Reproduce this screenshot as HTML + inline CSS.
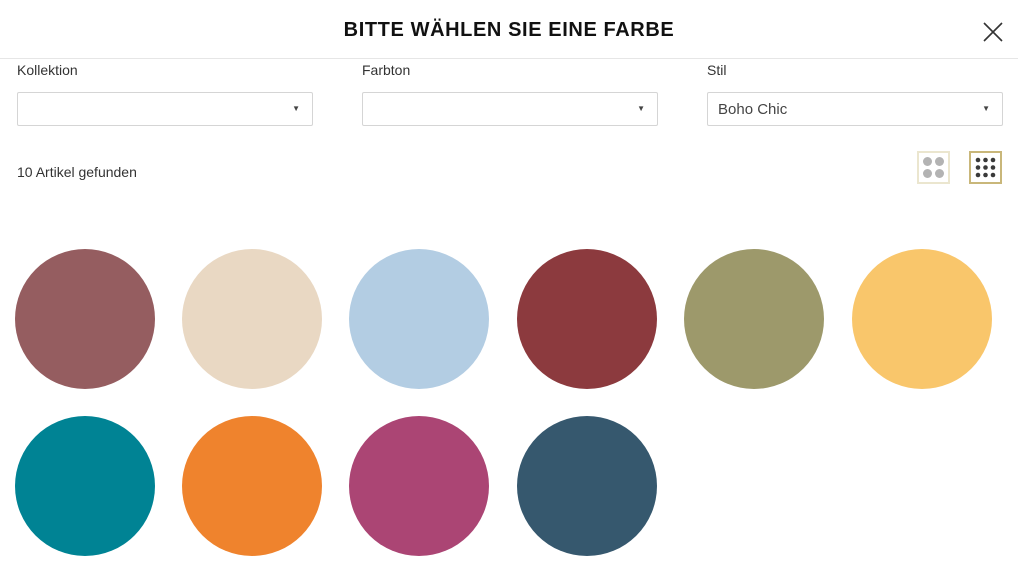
<!DOCTYPE html>
<html><head><meta charset="utf-8"><style>
body{margin:0;width:1018px;height:573px;background:#fff;font-family:"Liberation Sans",sans-serif;color:#333;position:relative;overflow:hidden}
.t{position:absolute;top:19px;left:0;width:1018px;text-align:center;font-weight:900;font-size:20px;color:#111;letter-spacing:0.6px}
.hr{position:absolute;top:58px;left:0;width:1018px;border-top:1px solid #e6e6e6}
.lab{position:absolute;top:62px;font-size:14px;color:#333}
.sel{position:absolute;top:92px;width:296px;height:34px;border:1px solid #d5d5d5;border-radius:2px;box-sizing:border-box;font-size:15px;color:#444;padding:8px 10px}
.sel:after{content:"▼";position:absolute;right:12px;top:11px;font-size:8px;color:#444}
.c{position:absolute;width:140px;height:140px;border-radius:50%}
.ib{position:absolute;top:151px;width:33px;height:33px;box-sizing:border-box}
.d{position:absolute;border-radius:50%}
</style></head><body>
<div class="t">BITTE WÄHLEN SIE EINE FARBE</div>
<svg style="position:absolute;left:983px;top:22px" width="20" height="20"><path d="M1 1L19 19M19 1L1 19" stroke="#333" stroke-width="1.6"/></svg>
<div class="hr"></div>
<div class="lab" style="left:17px">Kollektion</div>
<div class="lab" style="left:362px">Farbton</div>
<div class="lab" style="left:707px">Stil</div>
<div class="sel" style="left:17px"></div>
<div class="sel" style="left:362px"></div>
<div class="sel" style="left:707px">Boho Chic</div>
<div style="position:absolute;left:17px;top:164px;font-size:14px">10 Artikel gefunden</div>
<div class="ib" style="left:917px;border:2px solid #ebe6cf">
<div class="d" style="left:4px;top:4px;width:9px;height:9px;background:#b3b3b3"></div>
<div class="d" style="left:16px;top:4px;width:9px;height:9px;background:#b3b3b3"></div>
<div class="d" style="left:4px;top:16px;width:9px;height:9px;background:#b3b3b3"></div>
<div class="d" style="left:16px;top:16px;width:9px;height:9px;background:#b3b3b3"></div>
</div>
<div class="ib" style="left:969px;border:2px solid #c9b77a">
<svg width="29" height="29" style="position:absolute;left:0;top:0" fill="#3a3a3a">
<circle cx="7" cy="7" r="2.3"/><circle cx="14.5" cy="7" r="2.3"/><circle cx="22" cy="7" r="2.3"/>
<circle cx="7" cy="14.5" r="2.3"/><circle cx="14.5" cy="14.5" r="2.3"/><circle cx="22" cy="14.5" r="2.3"/>
<circle cx="7" cy="22" r="2.3"/><circle cx="14.5" cy="22" r="2.3"/><circle cx="22" cy="22" r="2.3"/></svg>
</div>
<div class="c" style="left:15px;top:249px;background:#955d60"></div>
<div class="c" style="left:182px;top:249px;background:#e9d8c3"></div>
<div class="c" style="left:349px;top:249px;background:#b3cde3"></div>
<div class="c" style="left:517px;top:249px;background:#8c3a3e"></div>
<div class="c" style="left:684px;top:249px;background:#9d996b"></div>
<div class="c" style="left:852px;top:249px;background:#f9c66b"></div>
<div class="c" style="left:15px;top:416px;background:#008394"></div>
<div class="c" style="left:182px;top:416px;background:#ef832d"></div>
<div class="c" style="left:349px;top:416px;background:#ab4574"></div>
<div class="c" style="left:517px;top:416px;background:#36586e"></div>
</body></html>
